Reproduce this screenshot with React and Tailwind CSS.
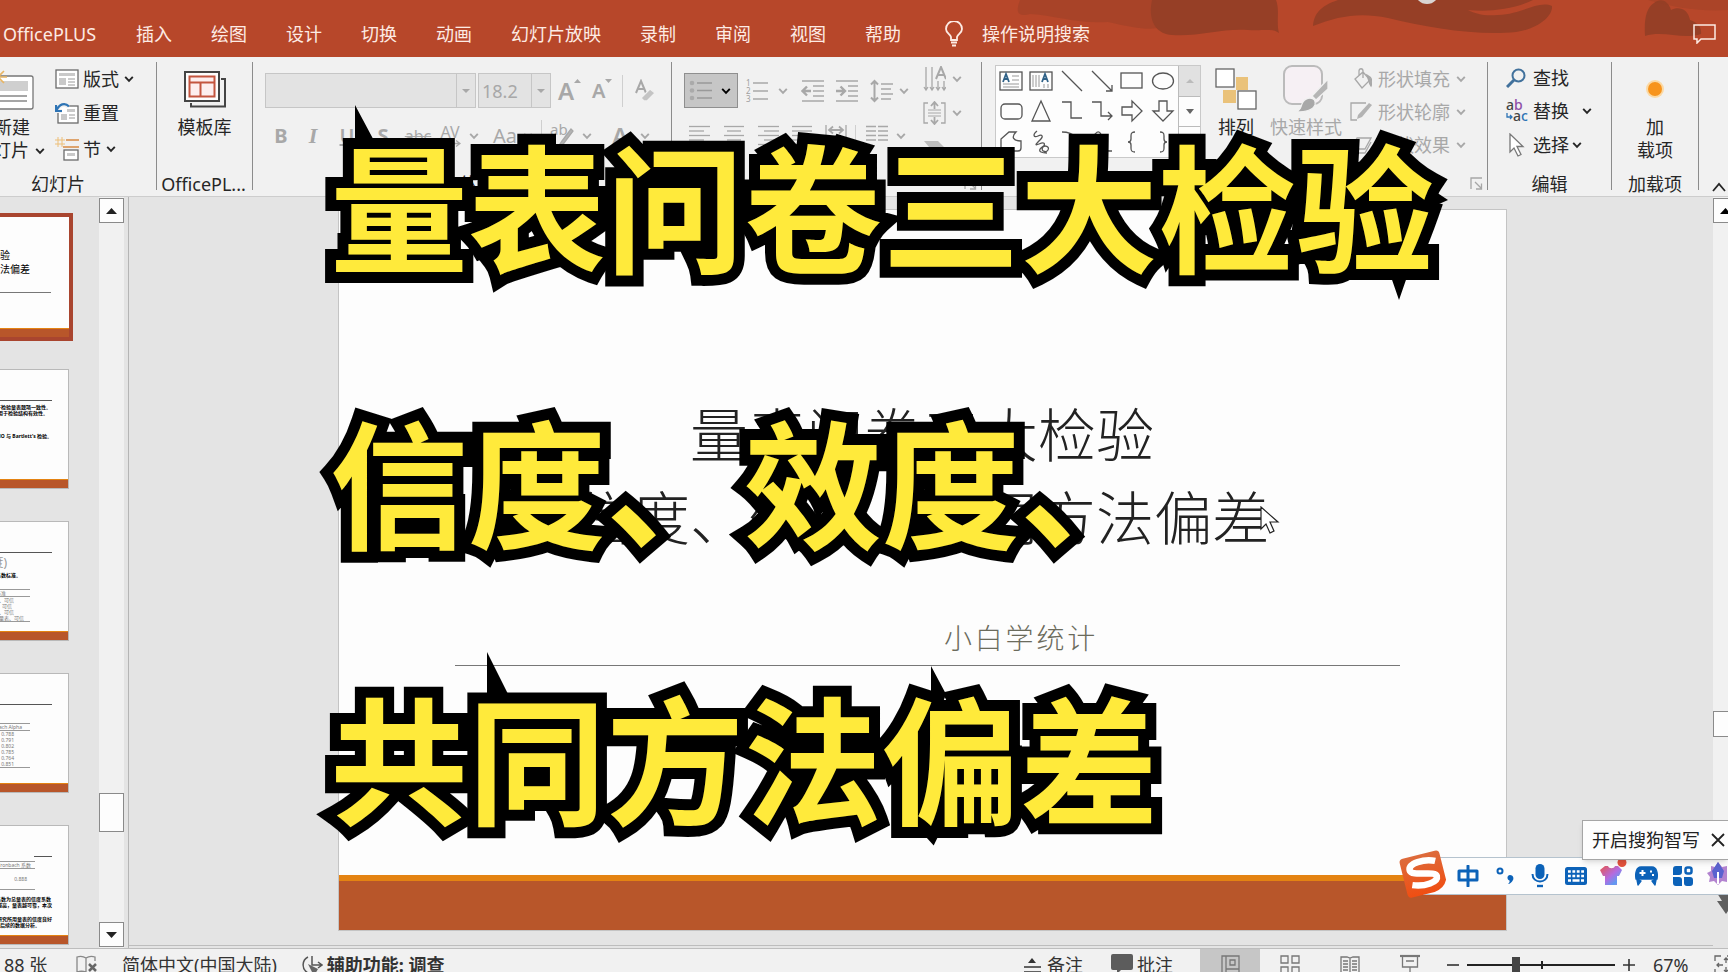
import React from "react";

const UI = "font-['Noto_Sans','Noto_Sans_CJK_SC',sans-serif]";

function Svg({ w, h, children, className = "" }) {
  return (
    <svg
      width={w}
      height={h}
      viewBox={`0 0 ${w} ${h}`}
      fill="none"
      stroke="currentColor"
      strokeWidth="1.3"
      className={"shrink-0 " + className}
      aria-hidden="true"
    >
      {children}
    </svg>
  );
}

const Chevron = ({ className = "" }) => (
  <Svg w={10} h={8} className={className}>
    <path d="M1.2 1.8 5 5.8 8.8 1.8" strokeWidth="1.9" />
  </Svg>
);

const Triangle = ({ up = false, w = 10, h = 6 }) => (
  <svg width={w} height={h} viewBox="0 0 10 6" preserveAspectRatio="none" fill="currentColor" className="shrink-0" aria-hidden="true">
    <path d={up ? "M0 6 5 0l5 6z" : "M0 0h10L5 6z"} />
  </svg>
);

const Launcher = () => (
  <Svg w={13} h={13}>
    <path d="M1 12V1h11M5 5l6 6M11.500 6.500v5.500H6" />
  </Svg>
);

function Group({ label, className = "", labelClassName = "", children, launcher = false }) {
  return (
    <section className={"flex h-[134px] shrink-0 flex-col " + className}>
      <div className="flex min-h-0 flex-1">{children}</div>
      <div className="flex h-[25px] items-center">
        <span className={"flex-1 text-center " + labelClassName}>{label}</span>
        {launcher && (
          <button aria-label={label + "设置"} className="mr-1 text-[#a6a6a6]">
            <Launcher />
          </button>
        )}
      </div>
    </section>
  );
}

const Separator = () => <div className="h-[128px] w-px shrink-0 bg-[#8c8c8c]" />;

function BigButton({ icon, lines, className = "" }) {
  return (
    <button className={"flex flex-col items-center " + className}>
      <span className="flex h-[54px] items-center justify-center">{icon}</span>
      {lines.map((l, i) => (
        <span key={i} className="flex items-center gap-1.5 leading-[23px] whitespace-nowrap">
          {l}
        </span>
      ))}
    </button>
  );
}

const NewSlideIcon = () => (
  <Svg w={46} h={42}>
    <rect x="7" y="8" width="38" height="33" rx="2" fill="#fff" stroke="#777" />
    <path d="M12 13h28v10H12z" fill="#cfcfcf" stroke="none" />
    <path d="M12 28h27M12 33h27" stroke="#888" />
    <path d="M10 0v18M2 9h17M4 3l12 12M16 3 4 15" stroke="#e8b563" strokeWidth="1.6" />
  </Svg>
);

const LayoutIcon = () => (
  <Svg w={24} h={20}>
    <rect x="1" y="1" width="22" height="18" fill="#fff" stroke="#6b6b6b" />
    <path d="M4 4h16v3H4zM4 9h7v7H4z" fill="#c9c9c9" stroke="none" />
    <path d="M13 10h7M13 13h7M13 16h7" stroke="#9a9a9a" strokeWidth="1" />
  </Svg>
);

const ResetIcon = () => (
  <Svg w={24} h={22}>
    <rect x="3" y="4" width="20" height="17" fill="#fff" stroke="#6b6b6b" />
    <path d="M12 7h8v3h-8zM6 12h6v6H6z" fill="#c9c9c9" stroke="none" />
    <path d="M14 13h6M14 16h6" stroke="#9a9a9a" strokeWidth="1" />
    <path d="M1 3v6h6M1.500 8.500C4 3 10 1 13.500 5" stroke="#f1f1f1" strokeWidth="4" />
    <path d="M1 3v6h6M1.500 8.500C4 2 10 0 14 4.500" stroke="#2e74b5" strokeWidth="2.200" />
  </Svg>
);

const SectionIcon = () => (
  <Svg w={24} h={24}>
    <path d="M3 0v10M7 0v10M0 3h10M0 7h10" stroke="#edbf79" strokeWidth="1" />
    <path d="M11 3h13M8 10h16" stroke="#d78a43" strokeWidth="1.600" />
    <rect x="9" y="13" width="14" height="10" fill="#fff" stroke="#6b6b6b" />
    <path d="M12 16h8v3h-8z" fill="#c9c9c9" stroke="none" />
  </Svg>
);

const TemplateIcon = () => (
  <Svg w={42} h={37}>
    <path d="M37 8h4v27.500H7V32" stroke="#444" strokeWidth="2" />
    <rect x="1" y="1" width="34" height="29" fill="#fdfdfd" stroke="#444" strokeWidth="2" />
    <rect x="5.500" y="5.500" width="25" height="20" fill="#fdeeee" stroke="#c4553f" strokeWidth="2" />
    <path d="M5.500 11.500h25M16.500 11.500v14" stroke="#c4553f" strokeWidth="2" />
  </Svg>
);

const Lines = ({ rows }) => (
  <Svg w={22} h={21}>
    {rows.map(([a, b], i) => (
      <path key={i} d={`M${a} ${1.5 + i * 4.5}H${b}`} />
    ))}
  </Svg>
);

const ShapeCell = ({ children, label }) => (
  <button aria-label={label} className="flex h-[30px] w-[30px] items-center justify-center">
    <Svg w={24} h={24}>{children}</Svg>
  </button>
);

function RibbonTabs() {
  const tabs = ["插入", "绘图", "设计", "切换", "动画", "幻灯片放映", "录制", "审阅", "视图", "帮助"];
  return (
    <header className="relative h-[57px] shrink-0 overflow-hidden bg-[#b7472a]">
      <svg width="720" height="57" viewBox="0 0 720 57" className="absolute top-0 right-0" fill="#963f26" aria-hidden="true">
        <path d="M12 0C8 10 8 18 22 14C50 16 70 24 100 22C125 28 140 30 150 28V0z" opacity=".45" />
        <path d="M144 0C140 18 146 34 164 35C190 37 215 28 240 30C256 31 264 28 271 33C268 22 272 10 268 0z" />
        <path d="M330 0C312 6 306 14 305 26C330 16 352 12 380 18C420 28 470 36 508 32C530 29 545 16 544 6C530 0 515 14 490 15C475 16 468 14 460 10C480 12 505 10 525 0z" />
        <path d="M637 36C636 20 638 8 646 3C652-2 660 0 663 10C670 6 680 8 682 20C688 22 694 26 693 34C675 40 655 30 637 36z" />
        <path d="M640 0c20 6 50 12 80 10V0z" opacity=".35" />
        <circle cx="419" cy="-8" r="12" fill="#d9d4d2" />
      </svg>
      <div className="relative flex h-full items-center pt-[10px] pl-[3px] text-[#fdebe4]">
        <nav className="flex items-center gap-[39px]">
          <button className="w-[94px] text-left">OfficePLUS</button>
          {tabs.map((t) => (
            <button key={t} className="whitespace-nowrap">
              {t}
            </button>
          ))}
        </nav>
        <button className="ml-[44px] flex items-center gap-[19px] whitespace-nowrap">
          <Svg w={18} h={26}>
            <path d="M6 19v-3C5 13 1 12 1 8a8 8 0 0 1 16 0c0 4-4 5-5 8v3zM6 21.500h6M7 24.500h4" strokeWidth="1.800" />
          </Svg>
          操作说明搜索
        </button>
        <button aria-label="批注" className="mr-3 ml-auto">
          <Svg w={23} h={20}>
            <path d="M1 1h21v14H8l-4 4v-4H1z" strokeWidth="1.500" />
          </Svg>
        </button>
      </div>
    </header>
  );
}

function FontGroup() {
  return (
    <Group label="字体" className="w-[418px] pl-3" launcher>
      <div className="flex flex-col gap-[10px] pt-[11px] text-[#a8a8a8]">
        <div className="flex h-[35px] items-center">
          <div className="flex h-full w-[211px] border border-[#c6c6c6] bg-[#e3e3e3]">
            <select disabled aria-label="字体" className="flex-1 appearance-none bg-transparent" />
            <span className="flex w-[19px] items-center justify-center border-l border-[#c6c6c6]">
              <Triangle w={8} h={4} />
            </span>
          </div>
          <div className="ml-0.5 flex h-full w-[73px] border border-[#c6c6c6] bg-[#e3e3e3]">
            <select disabled aria-label="字号" className="w-[52px] appearance-none bg-transparent pl-[3px] text-[#a8a8a8] opacity-100">
              <option>18.2</option>
            </select>
            <span className="flex w-[19px] items-center justify-center border-l border-[#c6c6c6]">
              <Triangle w={8} h={4} />
            </span>
          </div>
          <button aria-label="增大字号" className="ml-[7px] flex h-7 w-[26px] items-end text-2xl leading-7 font-semibold">
            A<span className="self-start pt-0.5"><Triangle up w={7} h={4} /></span>
          </button>
          <button aria-label="减小字号" className="ml-2 flex h-7 w-[26px] items-end text-xl leading-7 font-semibold">
            A<span className="self-start pt-0.5"><Triangle w={7} h={4} /></span>
          </button>
          <span className="ml-1 h-8 w-px bg-[#cfcfcf]" />
          <button aria-label="清除格式" className="ml-3">
            <Svg w={21} h={24}>
              <path d="M1 14 6 2l5 12M3 10h6" strokeWidth="2" />
              <path d="m6 19 9-9 5 4-8 8H9z" fill="#c4c4c4" stroke="#f1f1f1" />
            </Svg>
          </button>
        </div>
        <div className="flex h-[35px] items-center">
          <button className="w-8 text-center text-xl font-bold">B</button>
          <button className="w-8 text-center font-['Liberation_Serif',serif] text-[22px] font-bold italic">I</button>
          <button className="w-9 text-center text-xl font-semibold underline">U</button>
          <button className="w-9 text-center text-xl font-bold">S</button>
          <button className="w-[34px] text-center text-base line-through">abc</button>
          <button className="ml-1 flex flex-col items-center text-base leading-4" aria-label="字符间距">
            AV
            <Svg w={22} h={7}>
              <path d="M1 3.500h20M17 .5l4 3-4 3" />
            </Svg>
          </button>
          <Chevron className="ml-2" />
          <button className="ml-[14px] text-xl">Aa</button>
          <Chevron className="ml-1.5" />
          <span className="ml-2 h-8 w-px bg-[#cfcfcf]" />
          <button aria-label="突出显示" className="ml-2 flex items-center text-base">
            <Svg w={24} h={26}>
              <path d="m8 24 4-6L21 6l2 2-9 12-4 4z" fill="#b5b5b5" />
              <text x="0" y="12" fontSize="15" fill="#a8a8a8" stroke="none">ab</text>
            </Svg>
          </button>
          <Chevron className="ml-2" />
          <button className="ml-5 text-2xl font-semibold">A</button>
          <Chevron className="ml-3" />
        </div>
      </div>
    </Group>
  );
}

function ParagraphGroup() {
  return (
    <Group label="段落" className="w-[309px] pl-3" launcher>
      <div className="flex w-[239px] flex-col gap-[10px] pt-[11px] text-[#a8a8a8]">
        <div className="flex h-[35px] items-center">
          <button aria-label="项目符号" className="flex h-[35px] w-[54px] items-center justify-between border border-[#8f8f8f] bg-[#c6c6c6] pr-1.5 pl-1">
            <Svg w={24} h={21}>
              <path d="M8 3h15M8 10.500h15M8 18h15" stroke="#999" />
              <g fill="#aaa" stroke="none">
                <circle cx="3" cy="3" r="2.300" />
                <circle cx="3" cy="10.500" r="2.300" />
                <circle cx="3" cy="18" r="2.300" />
              </g>
            </Svg>
            <Chevron className="text-black" />
          </button>
          <button aria-label="编号" className="ml-2 flex items-center gap-2.5">
            <Svg w={22} h={24}>
              <path d="M7 4h15M7 12h15M7 20h15" />
              <g fontSize="8" fill="#a0a0a0" stroke="none">
                <text x="0" y="7">1</text>
                <text x="0" y="15">2</text>
                <text x="0" y="23">3</text>
              </g>
            </Svg>
            <Chevron />
          </button>
          <button aria-label="减少缩进" className="ml-[13px]">
            <Svg w={23} h={22}>
              <path d="M1 1h22M12 6h11M12 11h11M12 16h11M1 21h22" />
              <path d="M10 11H2M6 6.500 1.500 11 6 15.500" strokeWidth="2.400" />
            </Svg>
          </button>
          <button aria-label="增加缩进" className="ml-[11px]">
            <Svg w={23} h={22}>
              <path d="M1 1h22M13 6h10M13 11h10M13 16h10M1 21h22" />
              <path d="M1 11h8M5.500 6.500 10 11l-4.500 4.500" strokeWidth="2.400" />
            </Svg>
          </button>
          <button aria-label="行距" className="ml-3 flex items-center gap-1.5">
            <Svg w={23} h={24}>
              <path d="M11 5h12M11 10h10M11 15h12M11 20h10" />
              <path d="M4.500 2v20M1 5.500 4.500 2 8 5.500M1 18.500 4.500 22 8 18.500" strokeWidth="2" />
            </Svg>
            <Chevron />
          </button>
        </div>
        <div className="flex h-[35px] items-center gap-3 pl-[5px]">
          <button aria-label="左对齐"><Lines rows={[[0, 21], [0, 15], [0, 21], [0, 15], [0, 21]]} /></button>
          <button aria-label="居中"><Lines rows={[[1, 21], [4, 18], [1, 21], [4, 18], [1, 21]]} /></button>
          <button aria-label="右对齐"><Lines rows={[[1, 22], [7, 22], [1, 22], [7, 22], [1, 22]]} /></button>
          <button aria-label="两端对齐"><Lines rows={[[1, 21], [1, 21], [1, 21], [1, 21], [1, 21]]} /></button>
          <button aria-label="分散对齐">
            <Svg w={22} h={21}>
              <path d="M1 0v21M21 0v21M4 12h14M4 17h14" />
              <path d="M4 5h14M8 1.500 4 5l4 3.500M14 1.500 18 5l-4 3.500" strokeWidth="1.800" />
            </Svg>
          </button>
          <button aria-label="分栏" className="-ml-1 flex items-center gap-2 border-l border-[#cfcfcf] pl-2.5">
            <Svg w={22} h={21}>
              <path d="M0 1.500h10M0 6h10M0 10.500h10M0 15h10M12 1.500h10M12 6h10M12 10.500h10M12 15h10" />
            </Svg>
            <Chevron />
          </button>
        </div>
      </div>
      <div className="flex flex-col text-[#a8a8a8]">
        <button aria-label="文字方向" className="flex h-[34px] items-center gap-1.5">
          <Svg w={23} h={26}>
            <path d="M3 1v22M9 1v22M15 15v8M21 15v8M1 21l2 3 2-3M7 21l2 3 2-3M13 21l2 3 2-3M19 21l2 3 2-3" />
            <path d="m13 13 5-12 5 12M15 9h6" strokeWidth="2" />
          </Svg>
          <Chevron />
        </button>
        <button aria-label="对齐文本" className="flex h-[34px] items-center gap-1.5">
          <Svg w={23} h={24}>
            <path d="M5 2H1v20h4M18 2h4v20h-4" />
            <path d="M5 12h13M5 9h13M5 15h13" strokeWidth="1" />
            <path d="M11.500 2v6M8 5l3.500-4L15 5M11.500 16v6M8 19l3.500 4 3.500-4" strokeWidth="1.800" />
          </Svg>
          <Chevron />
        </button>
        <button aria-label="SmartArt" className="flex h-[34px] items-center gap-1.5">
          <Svg w={23} h={24}>
            <path d="M1 6h14l6 6-6 6H1l5-6z" fill="#bdbdbd" stroke="none" />
          </Svg>
        </button>
      </div>
    </Group>
  );
}

function DrawingGroup() {
  return (
    <Group label="绘图" className="w-[505px] pl-[13px]" launcher>
      <div className="mt-[3px] flex h-[93px] w-[206px] border border-[#c9c9c9] bg-[#fdfdfd]">
        <div className="grid w-[182px] grid-cols-6 grid-rows-3 text-[#555]">
          <ShapeCell label="文本框"><rect x="1" y="3" width="22" height="18" /><path d="M13 7h7M13 11h7M4 15h16M4 18h16" strokeWidth="1" stroke="#999" /><path d="m4 13 3-8 3 8M5 10h4" stroke="#2f6187" strokeWidth="1.800" /></ShapeCell>
          <ShapeCell label="竖排文本框"><rect x="1" y="3" width="22" height="18" /><path d="M4 6v12M7 6v12M10 6v12M15 15v4M19 15v4" strokeWidth="1" stroke="#999" /><path d="m13 13 3-8 3 8M14 10h4" stroke="#2f6187" strokeWidth="1.800" /></ShapeCell>
          <ShapeCell label="直线"><path d="m2 2 20 20" /></ShapeCell>
          <ShapeCell label="箭头"><path d="m2 2 20 20M22 16v6h-6" /></ShapeCell>
          <ShapeCell label="矩形"><rect x="1" y="4" width="21" height="15" /></ShapeCell>
          <ShapeCell label="椭圆"><ellipse cx="12" cy="12" rx="10.500" ry="8" /></ShapeCell>
          <ShapeCell label="圆角矩形"><rect x="2" y="5" width="21" height="15" rx="4" /></ShapeCell>
          <ShapeCell label="三角形"><path d="M12 2 21 22H3z" /></ShapeCell>
          <ShapeCell label="肘形连接符"><path d="M2 3h9v16h11" /></ShapeCell>
          <ShapeCell label="肘形箭头"><path d="M2 3h9v14h11M18 13l4 4-4 4" /></ShapeCell>
          <ShapeCell label="右箭头"><path d="M2 8h10V2l10 10-10 10v-6H2z" /></ShapeCell>
          <ShapeCell label="下箭头"><path d="M8 2h8v10h6L12 22 2 12h6z" /></ShapeCell>
          <ShapeCell label="任意多边形"><path d="M2 21V9l8-7h7c-5 5-3 9 5 9v7c0 2-1 3-3 3z" /></ShapeCell>
          <ShapeCell label="曲线"><path d="M8 1C3 5 5 8 9 6s6 0 2 4-6 6-1 4 7-1 4 3 3 6 5 3-3-6-7-2 2 5 6 5" /></ShapeCell>
          <ShapeCell label="弧形"><path d="M2 2c12 0 20 8 20 20" /></ShapeCell>
          <ShapeCell label="曲线连接符"><path d="M2 20C2 -2 12 -2 12 10s4 11 10 11" /></ShapeCell>
          <ShapeCell label="左大括号"><path d="M15 2c-4 0-4 2-4 4v3c0 2-1 3-3 3 2 0 3 1 3 3v3c0 2 0 4 4 4" /></ShapeCell>
          <ShapeCell label="右大括号"><path d="M9 2c4 0 4 2 4 4v3c0 2 1 3 3 3-2 0-3 1-3 3v3c0 2 0 4-4 4" /></ShapeCell>
        </div>
        <div className="flex flex-1 flex-col divide-y divide-[#bbb] border-l border-[#bbb]">
          <button aria-label="向上" className="flex flex-1 items-center justify-center bg-[#e1e1e1] text-[#bbb]"><Triangle up w={8} h={4} /></button>
          <button aria-label="向下" className="flex flex-1 items-center justify-center text-[#666]"><Triangle w={8} h={5} /></button>
          <button aria-label="更多" className="flex flex-1 items-center justify-center text-[#666]"><Triangle w={8} h={5} /></button>
        </div>
      </div>
      <BigButton
        className="ml-[13px] w-[44px]"
        icon={
          <Svg w={42} h={42}>
            <path d="M21 9h12v13H21zM8 22h13v13H8z" fill="#eac27a" stroke="none" />
            <rect x="1" y="1" width="18" height="18" fill="#fff" stroke="#666" />
            <rect x="23" y="23" width="18" height="18" fill="#fff" stroke="#666" />
          </Svg>
        }
        lines={["排列"]}
      />
      <BigButton
        className="ml-3 w-[72px] text-[#a8a8a8]"
        icon={
          <Svg w={46} h={48}>
            <rect x="1" y="1" width="38" height="38" rx="8" fill="#f6f0f4" stroke="#bbb" strokeWidth="2" />
            <path d="M45 14v10L33 35l-4-4z" fill="#b5b5b5" stroke="#f1f1f1" />
            <path d="M27 33c4 0 6 3 5 7-2 5-8 7-19 7 6-3 4-5 7-10 2-3 4-4 7-4z" fill="#a8a8a8" stroke="#f1f1f1" />
          </Svg>
        }
        lines={["快速样式"]}
      />
      <div className="ml-2 flex flex-col text-[#a8a8a8]">
        <button className="flex h-[33px] items-center gap-1.5 whitespace-nowrap">
          <Svg w={22} h={22}>
            <path d="m5 11 8-7 7 8-8 8zM9 8V3c0-3 4-3 4 0v7" />
            <path d="M17 7c4 2 6 6 4 11-2-2-2-6-4-11z" fill="#aaa" />
          </Svg>
          形状填充
          <Chevron />
        </button>
        <button className="flex h-[33px] items-center gap-1.5 whitespace-nowrap">
          <Svg w={22} h={22}>
            <path d="M16 2H1v17h6" />
            <path d="m7 18 1-4L19 2l3 2-10 12z" fill="#b3b3b3" stroke="none" />
          </Svg>
          形状轮廓
          <Chevron />
        </button>
        <button className="flex h-[33px] items-center gap-1.5 whitespace-nowrap">
          <Svg w={22} h={22}>
            <path d="m7 4-6 11h14l6-11zM1 15v4h14l6-11" />
          </Svg>
          形状效果
          <Chevron />
        </button>
      </div>
    </Group>
  );
}

function Ribbon() {
  return (
    <div className="flex h-[140px] shrink-0 overflow-hidden border-b border-[#cdcdcd] bg-[#f1f1f1] pt-[5px] text-[#262626]">
      <Group label="幻灯片" className="w-[156px]" labelClassName="pr-10">
        <div className="flex w-[55px] justify-end pr-[10px]">
          <BigButton
            className="items-end"
            icon={<span className="pr-[11px]"><NewSlideIcon /></span>}
            lines={[<span className="pr-[15px]">新建</span>, <>幻灯片<Chevron /></>]}
          />
        </div>
        <div className="flex flex-col">
          <button className="flex h-[34px] items-center gap-1"><LayoutIcon />版式<Chevron className="ml-px" /></button>
          <button className="flex h-[34px] items-center gap-1"><ResetIcon />重置</button>
          <button className="flex h-[37px] items-center gap-1"><SectionIcon />节<Chevron className="ml-px" /></button>
        </div>
      </Group>
      <Separator />
      <Group label="OfficePL..." className="w-[95px]" labelClassName="pr-0.5">
        <BigButton className="w-full" icon={<TemplateIcon />} lines={["模板库"]} />
      </Group>
      <Separator />
      <FontGroup />
      <Separator />
      <ParagraphGroup />
      <Separator />
      <DrawingGroup />
      <Separator />
      <Group label="编辑" className="w-[123px]">
        <div className="flex flex-col pl-[18px]">
          <button className="flex h-8 items-center gap-[7px]">
            <Svg w={20} h={20}>
              <circle cx="12.500" cy="7.500" r="6" stroke="#41719c" strokeWidth="2" />
              <path d="m8 12-7 7" stroke="#41719c" strokeWidth="3" />
            </Svg>
            查找
          </button>
          <button className="flex h-[34px] items-center gap-[5px]">
            <Svg w={22} h={24}>
              <g fontSize="14" stroke="none" fontWeight="500">
                <text x="0" y="11" fill="#444">a</text>
                <text x="8" y="11" fill="#8e4fa8">b</text>
                <text x="7" y="22" fill="#444">a</text>
                <text x="15" y="22" fill="#2e74b5">c</text>
              </g>
              <path d="M1 14v4h5M4 16l2 2-2 2" stroke="#2e74b5" />
            </Svg>
            替换
            <Chevron className="ml-2" />
          </button>
          <button className="flex h-[33px] items-center gap-[7px]">
            <Svg w={20} h={24}>
              <path d="M4 1v18l4-4 4 8 3-1.500-4-8h6z" fill="#fff" stroke="#777" />
            </Svg>
            选择
            <Chevron className="-ml-1" />
          </button>
        </div>
      </Group>
      <Separator />
      <Group label="加载项" className="w-[86px]">
        <BigButton
          className="w-full"
          icon={
            <Svg w={20} h={20}>
              <circle cx="10" cy="10" r="9" fill="#fbd9a4" stroke="none" />
              <circle cx="10" cy="10" r="7" fill="#f7941d" stroke="none" />
            </Svg>
          }
          lines={["加", "载项"]}
        />
      </Group>
      <Separator />
      <div className="flex flex-1 items-end justify-end pr-[2px] pb-[4px]">
        <button aria-label="折叠功能区">
          <Svg w={14} h={10}>
            <path d="m1 9 6-7 6 7" strokeWidth="1.800" />
          </Svg>
        </button>
      </div>
    </div>
  );
}

function Thumb({ selected = false, label, children }) {
  return (
    <button
      aria-label={label}
      className={
        "relative flex h-[120px] w-[194px] shrink-0 flex-col items-end overflow-hidden bg-[#fdfdfd] " +
        (selected ? "outline-4 outline-[#a9452f]" : "border border-[#b9b9b9]")
      }
    >
      {children}
      <span className="absolute inset-x-0 bottom-0 h-[9px] border-t border-[#e48312] bg-[#b8562a]" />
    </button>
  );
}

const Tiny = ({ children, className = "" }) => (
  <span className={"block text-[5px] leading-[6px] whitespace-nowrap " + className}>{children}</span>
);

function SlidePanel() {
  return (
    <aside className="flex w-[129px] shrink-0 overflow-hidden border-r border-[#b5b5b5]">
      <div className="flex w-[99px] flex-col items-end gap-8 pt-5 pr-[30px]">
        <Thumb selected label="幻灯片 1">
          <span className="mt-[31px] w-full pr-1 text-center text-[10px] leading-[14px]">
            量表问卷三大检验
            <br />
            信度、效度、共同方法偏差
          </span>
          <span className="mt-4 mr-[18px] h-px w-[157px] bg-[#777]" />
        </Thumb>
        <Thumb label="幻灯片 2">
          <span className="mt-[30px] mr-4 h-px w-[157px] bg-[#555]" />
          <Tiny className="mt-[3px] mr-[17px] font-bold">信度分析用于检验量表题项一致性。</Tiny>
          <Tiny className="mr-5 font-bold">效度分析用于检验结构有效性。</Tiny>
          <Tiny className="mt-[17px] mr-4 font-bold">2. KMO 与 Bartlett's 检验。</Tiny>
        </Thumb>
        <Thumb label="幻灯片 3">
          <span className="mt-[30px] mr-4 h-px w-[157px] bg-[#555]" />
          <span className="mt-1 mr-[61px] text-xs leading-3 text-[#999]">(信度)</span>
          <Tiny className="mt-[3px] mr-[47px] font-bold">信度系数标准。</Tiny>
          <span className="mt-[11px] mr-[38px] flex w-[110px] flex-col items-end border-y border-[#999] text-[#777]">
            <span className="w-full border-b border-[#999] pr-6 text-right"><Tiny>标准</Tiny></span>
            <Tiny className="pr-4">很好、可信</Tiny>
            <Tiny className="pr-[18px]">较好、可信</Tiny>
            <Tiny className="pr-4">一般、可信</Tiny>
            <Tiny className="pr-1.5">需修改量表、可信</Tiny>
          </span>
        </Thumb>
        <Thumb label="幻灯片 4">
          <span className="mt-[30px] mr-4 h-px w-[157px] bg-[#555]" />
          <span className="mt-[18px] mr-[38px] flex w-[110px] flex-col items-end border-y border-[#999] text-[#777]">
            <span className="w-full border-b border-[#999] pr-2 text-right"><Tiny>Cronbach Alpha</Tiny></span>
            {["0.788", "0.791", "0.802", "0.785", "0.764", "0.851"].map((v) => (
              <Tiny key={v} className="pr-4">{v}</Tiny>
            ))}
          </span>
        </Thumb>
        <Thumb label="幻灯片 5">
          <span className="mt-[30px] mr-4 h-px w-[18px] bg-[#555]" />
          <span className="mt-1 mr-[33px] flex w-[120px] flex-col items-end border-y border-[#999] text-[#777]">
            <span className="w-full border-b border-[#999] pr-1 text-right"><Tiny>项数　Cronbach 系数</Tiny></span>
            <Tiny className="py-[7px] pr-2">0.888</Tiny>
          </span>
          <Tiny className="mt-[6px] mr-[17px] font-bold">Cronbach 系数为总量表的信度系数</Tiny>
          <Tiny className="mr-4 font-bold">数值越大信度越高，量表越可靠，本次</Tiny>
          <Tiny className="mt-[8px] mr-4 font-bold">由此可知本研究所用量表的信度良好</Tiny>
          <Tiny className="mr-7 font-bold">可以进行后续的数据分析。</Tiny>
        </Thumb>
      </div>
      <div className="flex w-[25px] shrink-0 flex-col bg-[#f1f1f1] pt-px pb-px text-[#222]">
        <button aria-label="上一张" className="flex h-[25px] shrink-0 items-center justify-center border border-[#8a8a8a] bg-[#fdfdfd]">
          <Triangle up w={11} h={6} />
        </button>
        <div className="flex-[573]" />
        <div className="h-[39px] shrink-0 border border-[#8a8a8a] bg-[#fdfdfd]" />
        <div className="flex-[90]" />
        <button aria-label="下一张" className="flex h-[25px] shrink-0 items-center justify-center border border-[#8a8a8a] bg-[#fdfdfd]">
          <Triangle w={11} h={6} />
        </button>
      </div>
    </aside>
  );
}

function SlideCanvas() {
  return (
    <main className="flex min-w-0 flex-1">
      <div className="mb-0.5 flex flex-1 justify-center border-b border-[#bdbdbd] pt-3 pl-0.5">
        <article className="flex h-[722px] w-[1169px] max-w-full flex-col border border-[#c4c4c4] bg-[#fdfdfd]">
          <div className="flex flex-1 flex-col pt-[181px] font-['Noto_Sans_CJK_SC',sans-serif] font-light text-[#222]">
            <h1 className="text-center text-[58px] leading-[83px]">
              量表问卷三大检验
              <br />
              信度、效度、共同方法偏差
            </h1>
            <p className="mt-[59px] pl-[198px] text-center text-[28px] leading-[42px] tracking-widest text-[#6b6b5c]">小白学统计</p>
            <div className="mt-[7px] ml-[10%] h-px w-[81%] bg-[#777]" />
          </div>
          <div className="h-[6px] bg-[#e48312]" />
          <div className="h-[49px] bg-[#b8562a]" />
        </article>
      </div>
      <div className="flex w-[15px] shrink-0 flex-col overflow-hidden bg-[#f1f1f1] pt-px">
        <button aria-label="向上滚动" className="flex h-[25px] w-[25px] shrink-0 items-center justify-center border border-[#8a8a8a] bg-[#fdfdfd]">
          <Triangle up w={11} h={6} />
        </button>
        <div className="flex-[488]" />
        <div className="h-[26px] w-[25px] shrink-0 border border-[#8a8a8a] bg-[#fdfdfd]" />
        <div className="flex-[154]" />
        <button aria-label="下一张幻灯片" className="h-[57px] shrink-0 bg-[#e4e4e4] pl-1 text-[#5f5f5f]">
          <Svg w={18} h={22} className="mb-8">
            <path d="M0 0h18l-5 8h5l-9 13L0 8h5z" fill="currentColor" stroke="none" />
          </Svg>
        </button>
      </div>
    </main>
  );
}

function StatusBar() {
  return (
    <footer className="h-6 shrink-0 overflow-hidden border-t border-[#bdbdbd] bg-[#f1f1f1] text-[#333]">
      <div className="flex h-8 items-center whitespace-nowrap">
        <span className="w-[71px] pl-1">88 张</span>
        <button aria-label="拼写检查" className="ml-[5px]">
          <Svg w={22} h={20}>
            <path d="M10 17V3C7 1 4 1 1 2v15c3-1 6-1 9 0zM10 3c3-2 6-2 9-1v4" stroke="#888" />
            <path d="m13 9 7 7M20 9l-7 7" strokeWidth="2.500" stroke="#666" />
          </Svg>
        </button>
        <button className="ml-6">简体中文(中国大陆)</button>
        <button className="ml-[25px] flex items-center gap-1 font-bold">
          <Svg w={21} h={21}>
            <path d="M6 2C0 5-1 14 6 18M10 1v9h9M16 7l4 3-4 3" strokeWidth="1.500" stroke="#555" />
            <path d="m6 9 10 5-4 7z" fill="#666" stroke="none" />
          </Svg>
          辅助功能: 调查
        </button>
        <button className="ml-auto flex items-center gap-1.5">
          <Svg w={18} h={18}>
            <path d="M1 11h17M1 16h17" />
            <path d="m5 7 4-5 4 5z" fill="currentColor" stroke="none" />
          </Svg>
          备注
        </button>
        <button className="ml-7 flex items-center gap-1">
          <svg width="22" height="22" viewBox="0 0 22 22" fill="#5c5c5c" aria-hidden="true">
            <path d="M2 0h18q2 0 2 2v12q0 2-2 2H10l-4 4v-4H2q-2 0-2-2V2q0-2 2-2z" />
          </svg>
          批注
        </button>
        <button aria-label="普通视图" className="ml-[27px] flex h-8 w-[60px] items-center justify-center bg-[#c6c6c6]">
          <Svg w={19} h={20}>
            <path d="M1 1h17v18H1zM5 1v18M5 14h13M9 5h5v5H9z" stroke="#777" />
          </Svg>
        </button>
        <button aria-label="幻灯片浏览" className="flex w-[60px] justify-center">
          <Svg w={20} h={20}>
            <path d="M1 1h7v7H1zM12 1h7v7h-7zM1 12h7v7H1zM12 12h7v7h-7z" stroke="#777" />
          </Svg>
        </button>
        <button aria-label="阅读视图" className="flex w-[60px] justify-center">
          <Svg w={20} h={20}>
            <path d="M10 3v17M1 2h6l3 1 3-1h6v16h-6l-3 1-3-1H1zM3 6h5M3 9h5M3 12h5M3 15h5M12 6h5M12 9h5M12 12h5M12 15h5" stroke="#777" />
          </Svg>
        </button>
        <button aria-label="幻灯片放映" className="flex w-[60px] justify-center">
          <Svg w={20} h={22}>
            <path d="M0 2h20" strokeWidth="2.200" stroke="#777" />
            <path d="M2.500 2v11h15V2M6 7h8M10 13v6M6 20h8" stroke="#777" />
          </Svg>
        </button>
        <button aria-label="缩小" className="ml-[7px]">
          <Svg w={12} h={12}><path d="M0 6h12" strokeWidth="1.600" /></Svg>
        </button>
        <div className="relative ml-2 flex h-8 w-[148px] items-center">
          <span className="absolute left-[74px] h-2 w-0.5 bg-[#222]" />
          <input
            type="range"
            min="0"
            max="100"
            defaultValue="32"
            aria-label="缩放"
            className="relative h-0.5 w-full appearance-none bg-[#222] [&::-webkit-slider-thumb]:h-[17px] [&::-webkit-slider-thumb]:w-2 [&::-webkit-slider-thumb]:appearance-none [&::-webkit-slider-thumb]:bg-[#444]"
          />
        </div>
        <button aria-label="放大" className="ml-2">
          <Svg w={12} h={12}><path d="M0 6h12M6 0v12" strokeWidth="1.600" /></Svg>
        </button>
        <button className="ml-[18px] w-[45px] text-left">67%</button>
        <button aria-label="适应窗口" className="ml-4 w-[14px] overflow-hidden">
          <Svg w={24} h={20}>
            <path d="M1 6V1h6M1 14v5h6M13 1h10v18H13M12 3v5M12 12v5M3 10h6M15 10h5M10 5l2-2 2 2M5 8l-2 2 2 2M10 15l2 2 2-2" stroke="#666" />
          </Svg>
        </button>
      </div>
    </footer>
  );
}

function InputMethodBar() {
  return (
    <div className="absolute right-0 bottom-[77px] flex flex-col items-end">
      <div className="relative z-10 flex h-10 w-[146px] items-center border border-r-0 border-[#a5a5a5] bg-[#fdfdfd] pl-[9px] whitespace-nowrap text-[#222] shadow-md">
        开启搜狗智写
        <button aria-label="关闭" className="ml-[11px]">
          <Svg w={14} h={14}><path d="m1 1 12 12M13 1 1 13" strokeWidth="1.800" /></Svg>
        </button>
      </div>
      <div className="-mt-[3px] flex h-[38px] w-[318px] items-center border-y border-[#b5c3ce] bg-[#fdfdfd] text-[#0c62b8]">
        <svg width="50" height="50" viewBox="0 0 50 50" className="-mt-1 -ml-[11px] shrink-0" aria-hidden="true">
          <defs>
            <linearGradient id="logo" x1="0" y1="0" x2="0" y2="1">
              <stop offset="0" stopColor="#dd6b3c" />
              <stop offset="1" stopColor="#f04e12" />
            </linearGradient>
          </defs>
          <g transform="rotate(-14 25 25)">
            <path d="M8 5h33q4 0 4 4v27q-4 8-14 9H8q-4 0-4-4V9q0-4 4-4z" fill="url(#logo)" />
            <path d="M39 15C29 10 12 11 12 18s25 6 25 12-14 8-26 3" fill="none" stroke="#fff" strokeWidth="6.500" />
          </g>
        </svg>
        <Svg w={22} h={22} className="ml-2">
          <path d="M2 6h18v9H2zM11 1v20" strokeWidth="3" strokeLinecap="round" strokeLinejoin="round" />
        </Svg>
        <Svg w={18} h={18} className="ml-[17px]">
          <circle cx="4" cy="4" r="2.500" strokeWidth="2" />
          <path d="M14 8c3 0 4 3 3 5s-3 4-5 4c1-1 2-2 1.500-3.500-3-1-2.500-5.500.5-5.500z" fill="currentColor" stroke="none" />
        </Svg>
        <Svg w={18} h={24} className="ml-[17px]">
          <rect x="4.500" y="0" width="9" height="15" rx="4.500" fill="currentColor" stroke="none" />
          <path d="M1.500 10c0 10 15 10 15 0" strokeWidth="2" />
          <path d="M6 22h6" strokeWidth="2.400" />
        </Svg>
        <Svg w={22} h={18} className="ml-4">
          <rect x="0" y="0" width="22" height="18" rx="2.500" fill="currentColor" stroke="none" />
          <path d="M3 4.500h16M3 9h16" stroke="#fff" strokeWidth="2.600" strokeDasharray="2.800 1.600" />
          <path d="M3 13.500h3M7.500 13.500h7M16 13.500h3" stroke="#fff" strokeWidth="2.600" />
        </Svg>
        <svg width="28" height="28" viewBox="0 0 28 28" className="-mt-2 ml-3 shrink-0" aria-hidden="true">
          <defs>
            <linearGradient id="shirt" x1="0" y1="0" x2="1" y2="1">
              <stop offset="0" stopColor="#e8554d" />
              <stop offset=".5" stopColor="#b46be0" />
              <stop offset=".8" stopColor="#5b9cf2" />
              <stop offset="1" stopColor="#d96bd0" />
            </linearGradient>
          </defs>
          <path d="M1 12 6 8h3c1 3 6 3 7 0h3l4 4-3 6h-2v9H6v-9H4z" fill="url(#shirt)" />
          <circle cx="23" cy="4.500" r="4.500" fill="#e5533d" />
        </svg>
        <Svg w={23} h={20} className="ml-2">
          <path d="M6 1h11c5 0 6 7 5 12H1C0 8 1 1 6 1zM2 14l4 1-3 4zM21 14l-4 1 3 4z" fill="currentColor" stroke="currentColor" strokeLinejoin="round" />
          <path d="M7.500 4v6M4.500 7h6M15 5.500h2M17 9h2" stroke="#fff" strokeWidth="2" />
        </Svg>
        <Svg w={20} h={20} className="ml-[15px]">
          <path d="M0 3q0-3 3-3h6v6q0 3-3 3H0zM0 11h6q3 0 3 3v6H3q-3 0-3-3zM11 11h6q3 0 3 3v3q0 3-3 3h-3q-3 0-3-3z" fill="currentColor" stroke="none" />
          <rect x="12.500" y="1.500" width="6" height="6" rx="2" strokeWidth="2.500" />
        </Svg>
        <svg width="20" height="24" viewBox="0 0 20 24" className="-mt-1 ml-[14px] shrink-0" aria-hidden="true">
          <path d="m11 0 4 5 5-1v16l-5-1-4 4-4-4-5 1 1-5-3-4 4-2 0-5 4 1z" fill="#b283cf" />
          <path d="m11 0 6 9-2 7h-8L5 9z" fill="#5a62cf" />
          <path d="M11 10v12" stroke="#fff" strokeWidth="2" />
        </svg>
      </div>
    </div>
  );
}

function Caption() {
  return (
    <div className="pointer-events-none absolute top-16 left-[330px]">
      <svg width="1120" height="640" viewBox="0 0 1120 640" className="absolute top-0 left-0" aria-hidden="true">
        <path d="M25 41v45h24zM1060 210h18l-9 26zM1100 124l18 12-18 8zM157 588v44h22zM601 602v30h16z" />
      </svg>
      <p className="relative font-['Noto_Sans_CJK_SC',sans-serif] text-[138px] leading-[276px] font-bold whitespace-nowrap text-[#ffea3b] [-webkit-text-stroke:22px_#000] [paint-order:stroke_fill]">
        量表问卷三大检验
        <br />
        信度、效度、
        <br />
        共同方法偏差
      </p>
    </div>
  );
}

export default function App() {
  return (
    <div className={"relative flex h-screen flex-col overflow-hidden bg-[#e4e4e4] text-lg leading-6 " + UI}>
      <RibbonTabs />
      <Ribbon />
      <div className="flex min-h-0 flex-1">
        <SlidePanel />
        <SlideCanvas />
      </div>
      <StatusBar />
      <svg width="20" height="30" viewBox="0 0 20 30" className="absolute top-[506px] left-[1260px]" aria-hidden="true">
        <path d="M1 1v22l5-5 4 9 4-2-4-9h8z" fill="#fff" stroke="#222" strokeWidth="1.200" />
      </svg>
      <Caption />
      <InputMethodBar />
    </div>
  );
}
